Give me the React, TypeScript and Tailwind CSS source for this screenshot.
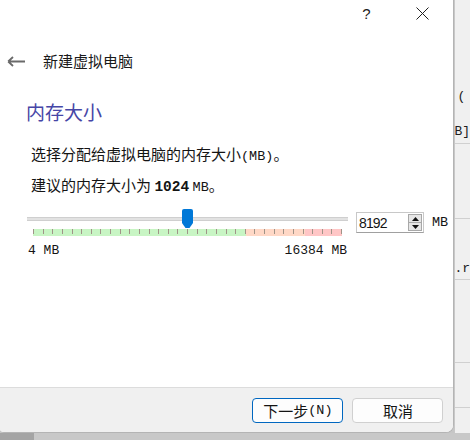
import React from "react";

export default function App() {
  const ticks = Array.from({ length: 33 });
  return (
    <div className="w-[470px] h-[440px] flex flex-col bg-[#c6c6c6] overflow-hidden font-['Noto_Sans_CJK_SC',sans-serif] text-[#141414]">
      <div className="flex h-[433px]">
        <div className="w-[459px] h-full flex flex-col bg-white border-r border-b border-[#b4b4b4] rounded-br-[8px] rounded-bl-[4px] overflow-hidden">
          {/* title bar */}
          <div className="h-[26px] flex justify-end items-center pr-[8px] gap-[10px]">
            <div className="w-[46px] flex justify-center text-[15px] leading-none font-['Liberation_Sans',sans-serif] text-[#202020]">?</div>
            <div className="w-[46px] flex justify-center">
              <svg width="13" height="13" viewBox="0 0 13 13">
                <path d="M0.5 0.5 L12.5 12.5 M12.5 0.5 L0.5 12.5" stroke="#202020" strokeWidth="1" fill="none" />
              </svg>
            </div>
          </div>
          {/* header */}
          <div className="mt-[24px] h-[22px] flex items-center pl-[7px]">
            <svg width="18" height="11" viewBox="0 0 18 11">
              <path d="M1.2 5.5 H18 M1.2 5.5 L6 1 M1.2 5.5 L6 10" stroke="#6a6a6a" strokeWidth="1.8" fill="none" />
            </svg>
            <span className="ml-[18px] text-[15px] leading-[22px] text-[#1a1a1a]">新建虚拟电脑</span>
          </div>
          {/* heading */}
          <div className="mt-[27px] pl-[26px] text-[19px] leading-[26px] text-[#4646a6]">内存大小</div>
          <div className="mt-[19px] pl-[31px] text-[15px] leading-[20px]">
            选择分配给虚拟电脑的内存大小<span className="font-['Liberation_Mono',monospace] text-[13.5px]">(MB)</span>。
          </div>
          <div className="mt-[8px] pl-[31px] text-[15px] leading-[20px]">
            建议的内存大小为 <span className="font-['Liberation_Mono',monospace] text-[14.5px] font-bold">1024</span>{" "}
            <span className="font-['Liberation_Mono',monospace] text-[13.5px]">MB</span>。
          </div>
          {/* slider row */}
          <div className="mt-[11px] pl-[27px] flex items-start">
            <div className="w-[321px] flex flex-col">
              <div className="relative h-[20px]">
                <div className="mt-[8px] h-[4px] bg-[#e2e2e2] border-t border-b border-[#cfcfcf]" />
                <svg className="absolute top-0 left-[155px]" width="11" height="19" viewBox="0 0 11 19">
                  <path d="M0 2 Q0 0 2 0 H9 Q11 0 11 2 V14 L7.5 19 H3.5 L0 14 Z" fill="#0078d7" />
                </svg>
              </div>
              <div className="ml-[6px] w-[309px] h-[7px] relative flex">
                <div className="w-[213px] bg-[#c8f5c4]" />
                <div className="w-[59px] bg-[#ffd8c6]" />
                <div className="flex-1 bg-[#ffc6c6]" />
                <div className="absolute inset-0 flex justify-between">
                  {ticks.map((_, i) => (
                    <div key={i} className="w-[1px] h-[5px] bg-[#a09488]" />
                  ))}
                </div>
              </div>
              <div className="mt-[7px] flex justify-between pl-[1px] pr-[1px] font-['Liberation_Mono',monospace] text-[13px] leading-[15px]">
                <span>4 MB</span>
                <span>16384 MB</span>
              </div>
            </div>
            <div className="ml-[8px] mt-[3px] w-[68px] h-[21px] border border-[#c8c8c8] border-b-[#a0a0a0] bg-white flex items-center">
              <span className="pl-[2px] flex-1 font-['Liberation_Sans',sans-serif] text-[14px] tracking-[-0.9px] leading-none">8192</span>
              <div className="mr-[1px] w-[14px] h-[17px] border border-[#a8a8a8] bg-[#e6e6e6] flex flex-col">
                <div className="flex-1 flex items-center justify-center border-b border-[#a8a8a8]">
                  <svg width="7" height="4" viewBox="0 0 7 4"><path d="M3.5 0 L7 4 H0 Z" fill="#111" /></svg>
                </div>
                <div className="flex-1 flex items-center justify-center">
                  <svg width="7" height="4" viewBox="0 0 7 4"><path d="M0 0 H7 L3.5 4 Z" fill="#111" /></svg>
                </div>
              </div>
            </div>
            <span className="ml-[8px] mt-[6px] font-['Liberation_Mono',monospace] text-[13.5px] leading-[15px]">MB</span>
          </div>
          <div className="flex-1" />
          {/* footer */}
          <div className="h-[45px] border-t border-[#dcdcdc] bg-[#f0f0f0] flex justify-end items-start pt-[10px] pr-[10px] gap-[9px]">
            <button className="w-[91px] h-[25px] rounded-[4px] border border-[#0067c0] bg-[#fdfdfd] text-[15px] leading-none flex items-center justify-center">
              下一步<span className="font-['Liberation_Mono',monospace] text-[13.5px]">(N)</span>
            </button>
            <button className="w-[91px] h-[25px] rounded-[4px] border border-[#d0d0d0] bg-[#fdfdfd] text-[15px] leading-none flex items-center justify-center">
              取消
            </button>
          </div>
        </div>
        {/* background window strip */}
        <div className="flex-1 bg-[#f0f0f0] border-l border-[#c8c8c8] flex flex-col font-['Liberation_Mono',monospace] text-[13px] leading-[15px] text-[#202020]">
          <div className="mt-[89px] pl-[2px]">(</div>
          <div className="mt-[20px] -ml-[1px]">B]</div>
          <div className="mt-[4px] h-[1px] bg-[#d0d0d0]" />
          <div className="mt-[74px] h-[1px] bg-[#d0d0d0]" />
          <div className="mt-[42px] -ml-[1px]">.r</div>
          <div className="mt-[3px] h-[1px] bg-[#d0d0d0]" />
          <div className="mt-[82px] h-[1px] bg-[#d0d0d0]" />
          <div className="mt-[44px] h-[1px] bg-[#d0d0d0]" />
        </div>
      </div>
      <div className="flex h-[7px]">
        <div className="w-[34px] bg-[#a4a4a4]" />
        <div className="flex-1 bg-[#c8c8c8]" />
      </div>
    </div>
  );
}
